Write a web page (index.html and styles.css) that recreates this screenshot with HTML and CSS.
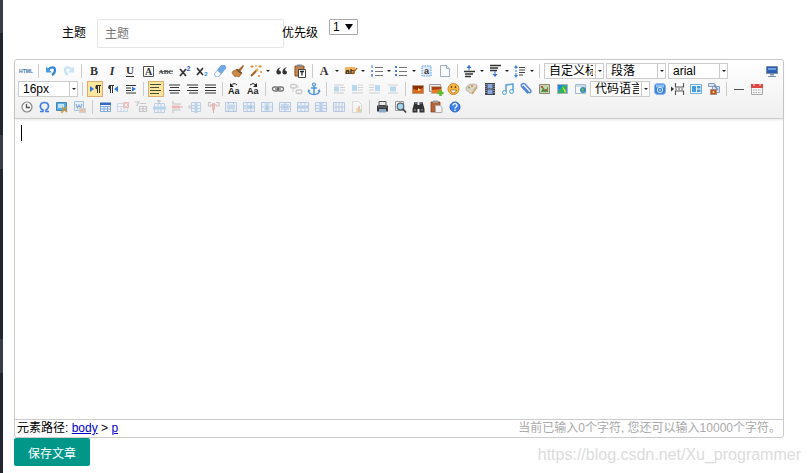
FILE: index.html
```html
<!DOCTYPE html>
<html lang="zh-CN">

<head>
    <meta charset="UTF-8">
    <meta name="viewport" content="width=device-width, initial-scale=1.0">
    <title>写文章</title>
    <link rel="stylesheet" href="styles.css">
</head>

<body>
    <div class="side"></div>
    <form class="main">
        <div class="form-row">
            <label class="label-title" for="title">主题</label>
            <input class="title-input" type="text" id="title" placeholder="主题">
            <label class="label-level" for="level">优先级</label>
            <div class="level">
                <select id="level">
                    <option>1</option>
                    <option>2</option>
                    <option>3</option>
                </select>
                <svg viewBox="0 0 8 8"><path d="M0 1h8L4 7z" /></svg>
            </div>
        </div>

        <div class="editor">
            <div class="toolbar">
                <!-- 第一行 -->
                <div class="tool-row">
                    <button type="button" class="btn" title="源代码"><svg viewBox="0 0 16 16"><text x="8" y="10" font-size="5" font-weight="bold" text-anchor="middle" fill="#3d73a8">HTML</text></svg></button>
                    <i class="sep"></i>
                    <button type="button" class="btn" title="撤销"><svg viewBox="0 0 16 16"><path d="M5 7c3-4 7-3 7 0 0 2-1 4-3 5" fill="none" stroke="#3388d5" stroke-width="2.2" /><path d="M3 3.500v6h6z" fill="#4a9be2" /></svg></button>
                    <button type="button" class="btn off" title="重做"><svg viewBox="0 0 16 16"><path d="M11 7C8 3 4 4 4 7c0 2 1 4 3 5" fill="none" stroke="#6bb2e8" stroke-width="2.200" /><path d="M13 3.500v6H7z" fill="#6bb2e8" /></svg></button>
                    <i class="sep"></i>
                    <button type="button" class="btn" title="加粗"><svg viewBox="0 0 16 16"><text class="serif" x="8" y="12" font-size="12" font-weight="bold">B</text></svg></button>
                    <button type="button" class="btn" title="斜体"><svg viewBox="0 0 16 16"><text class="serif" x="8" y="12" font-size="12" font-weight="bold" font-style="italic">I</text></svg></button>
                    <button type="button" class="btn" title="下划线"><svg viewBox="0 0 16 16"><text class="serif" x="8" y="11" font-size="11" font-weight="bold">U</text><path d="M4 13.500h8" stroke="#333" /></svg></button>
                    <button type="button" class="btn" title="字符边框"><svg viewBox="0 0 16 16"><path d="M3.500 3.500h10v10h-10z" fill="#fff" stroke="#555" /><text class="serif" x="8.500" y="12" font-size="10" font-weight="bold">A</text></svg></button>
                    <button type="button" class="btn" title="删除线"><svg viewBox="0 0 16 16"><text class="serif" x="8" y="11" font-size="7" font-weight="bold">ABC</text><path d="M1 8.500h14" stroke="#444" stroke-width=".7" /></svg></button>
                    <button type="button" class="btn" title="上标"><svg viewBox="0 0 16 16"><path d="M4 6l6 7M10 6l-6 7" stroke="#333" stroke-width="1.700" /><text x="12.500" y="7.500" font-size="7" font-weight="bold" text-anchor="middle" fill="#2b63c8">2</text></svg></button>
                    <button type="button" class="btn" title="下标"><svg viewBox="0 0 16 16"><path d="M3 5l6 7M9 5l-6 7" stroke="#333" stroke-width="1.700" /><text x="12" y="13" font-size="6" font-weight="bold" text-anchor="middle" fill="#2b8be0">2</text></svg></button>
                    <button type="button" class="btn" title="清除格式"><svg viewBox="0 0 16 16"><path d="M9 2.500h4l1 2.500-7 8.500H3.500L2.500 11z" fill="#6fa8e8" stroke="#5f8cc8" stroke-width=".6" /><path d="M5 7.500l4 3-2.500 3h-3l-1-2.500z" fill="#fff" stroke="#9ab4d0" stroke-width=".6" /></svg></button>
                    <button type="button" class="btn" title="格式刷"><svg viewBox="0 0 16 16"><path d="M8 7l5-5 1 1-4 6z" fill="#a8672a" /><path d="M3 8l5-2 4 4-3 4-3-1-1 1-3-4z" fill="#c98b45" stroke="#8e5722" stroke-width=".6" /><path d="M6.500 6.500l5 4" stroke="#6c4b34" stroke-width="1.500" /></svg></button>
                    <div class="split">
                        <button type="button" class="btn" title="自动排版"><svg viewBox="0 0 16 16"><path d="M3 13l6-6" stroke="#a6602a" stroke-width="2" /><path d="M8 8l2-2" stroke="#e8b040" stroke-width="2" /><path d="M4 2v3M2.500 3.500h3M8 2v2M12 2v3M10.500 3.500h3M13 8v2M12 9h2M11 12v2M10 13h2" stroke="#f08428" /></svg></button>
                        <i class="arrow"></i>
                    </div>
                    <button type="button" class="btn" title="引用"><svg viewBox="0 0 16 16"><path d="M7 4C4 5 2 7 2.500 10c.4 2 4.500 2 4.500-.5C7 8 6 7.500 4.800 7.500 5 6 6 5 7 4zM13 4c-3 1-5 3-4.500 6 .4 2 4.500 2 4.500-.5 0-1.500-1-2-2.200-2 .2-1.500 1.200-2.500 2.200-3.500z" fill="#333" /></svg></button>
                    <button type="button" class="btn" title="纯文本粘贴"><svg viewBox="0 0 16 16"><path d="M3 3h9v10H3z" fill="#c9824a" stroke="#8a5026" /><path d="M5 1.500h5V4H5z" fill="#888" /><path d="M6.500 6.500h7v8h-7z" fill="#fff" stroke="#444" /><path d="M8 8.500h4M10 8.500v4" stroke="#222" stroke-width="1.300" /></svg></button>
                    <i class="sep"></i>
                    <div class="split">
                        <button type="button" class="btn" title="字体颜色"><svg viewBox="0 0 16 16"><text class="serif" x="7" y="12" font-size="12" font-weight="bold">A</text></svg></button>
                        <i class="arrow"></i>
                    </div>
                    <div class="split">
                        <button type="button" class="btn" title="背景色"><svg viewBox="0 0 16 16"><path d="M2 4h10v7H2z" fill="#f5b35c" /><text x="7" y="10.500" font-size="8" font-weight="bold" text-anchor="middle" fill="#222">ab</text><path d="M9 11l5-6" stroke="#b56a2c" stroke-width="1.500" /></svg></button>
                        <i class="arrow"></i>
                    </div>
                    <div class="split menu">
                        <button type="button" class="btn" title="有序列表"><svg viewBox="0 0 16 16"><path d="M3 2v3M2 8h2M2 12h2M3 7v2M3 11v3" stroke="#3f6fd0" /><path d="M6 4.500h8M6 8.500h8M6 12.500h8" stroke="#777" /></svg></button>
                        <i class="arrow"></i>
                    </div>
                    <div class="split menu">
                        <button type="button" class="btn" title="无序列表"><svg viewBox="0 0 16 16"><path d="M1 3h2v2H1zM1 7h2v2H1zM1 11h2v2H1z" fill="#4a78e0" /><path d="M5 4.500h8M5 8.500h8M5 12.500h8" stroke="#777" /></svg></button>
                        <i class="arrow"></i>
                    </div>
                    <button type="button" class="btn" title="全选"><svg viewBox="0 0 16 16"><path d="M3 3h9v10H3z" fill="#dceafa" stroke="#5d98df" stroke-dasharray="1.500 1" /><text x="7.500" y="11" font-size="9" font-weight="bold" text-anchor="middle" fill="#333">a</text></svg></button>
                    <button type="button" class="btn" title="清空文档"><svg viewBox="0 0 16 16"><path d="M3.500 2.500h6l3 3v8h-9z" fill="#fafcff" stroke="#9fb0c6" /><path d="M9.500 2.500v3h3" fill="#dfe8f2" stroke="#9fb0c6" /></svg></button>
                    <i class="sep"></i>
                    <div class="split menu">
                        <button type="button" class="btn" title="段前距"><svg viewBox="0 0 16 16"><path d="M2 8.500h11M3 11h8M3 13.500h6" stroke="#333" stroke-width="1.300" /><path d="M7 2.500v5" stroke="#3972c8" /><path d="M7 2l2.500 3h-5z" fill="#3972c8" /></svg></button>
                        <i class="arrow"></i>
                    </div>
                    <div class="split menu">
                        <button type="button" class="btn" title="段后距"><svg viewBox="0 0 16 16"><path d="M3 2.500h11M3 5h8M3 7.500h7" stroke="#333" stroke-width="1.300" /><path d="M8 8v5" stroke="#3972c8" /><path d="M8 14l2.500-3h-5z" fill="#3972c8" /></svg></button>
                        <i class="arrow"></i>
                    </div>
                    <div class="split menu">
                        <button type="button" class="btn" title="行间距"><svg viewBox="0 0 16 16"><path d="M7 4.500h6M7 7h6M7 9.500h6M7 12h4" stroke="#444" /><path d="M4 4v9" stroke="#3972c8" stroke-dasharray="2 1" /><path d="M4 2l2 3H2zM4 15l2-3H2z" fill="#3b82dc" /></svg></button>
                        <i class="arrow"></i>
                    </div>
                    <i class="sep"></i>
                    <div class="combo"><select aria-label="自定义标题"><option>自定义标题</option></select><i class="arrow"></i></div>
                    <div class="combo"><select aria-label="段落格式"><option>段落</option></select><i class="arrow"></i></div>
                    <div class="combo"><select aria-label="字体"><option>arial</option></select><i class="arrow"></i></div>
                    <button type="button" class="btn full" title="全屏"><svg viewBox="0 0 16 16"><path d="M2.500 3.500h11v7h-11z" fill="#2b5fb4" stroke="#7b8da8" /><path d="M4 5h8v2H4z" fill="#6f9fe0" /><path d="M6 11h4v1.500H6zM4 13h8v1H4z" fill="#8091a8" /></svg></button>
                </div>

                <!-- 第二行 -->
                <div class="tool-row">
                    <div class="combo"><select aria-label="字号"><option>16px</option></select><i class="arrow"></i></div>
                    <i class="sep"></i>
                    <button type="button" class="btn on" title="从左向右输入"><svg viewBox="0 0 14 14"><path d="M2 4l4 3-4 3z" fill="#2f79dc" /><path d="M9.500 3v8M11.500 3v8M8 3.500h5" stroke="#333" /><path d="M9.500 3a2 2 0 0 0 0 4.500z" fill="#333" /></svg></button>
                    <button type="button" class="btn" title="从右向左输入"><svg viewBox="0 0 16 16"><path d="M13 5L9 8l4 3z" fill="#2f79dc" /><path d="M5.500 4v8M7.500 4v8M4 4.500h5" stroke="#333" /><path d="M5.500 4a2 2 0 0 0 0 4.500z" fill="#333" /></svg></button>
                    <button type="button" class="btn" title="首行缩进"><svg viewBox="0 0 16 16"><path d="M3 4.500h10M3 7h5M3 9.500h5M3 12h10" stroke="#333" stroke-width="1.200" /><path d="M9 5.500v5L13 8z" fill="#2f79dc" /></svg></button>
                    <i class="sep"></i>
                    <button type="button" class="btn on" title="居左对齐"><svg viewBox="0 0 14 14"><path d="M1 2.500h11M1 5.500h9M1 8.500h11M1 11.500h9" stroke="#4b4b3c" /></svg></button>
                    <button type="button" class="btn" title="居中对齐"><svg viewBox="0 0 16 16"><path d="M3 4h11M4 6.500h9M3 9.500h11M4 12h9" stroke="#333" stroke-width="1.200" /></svg></button>
                    <button type="button" class="btn" title="居右对齐"><svg viewBox="0 0 16 16"><path d="M3 4h11M5 6.500h9M3 9.500h11M5 12h9" stroke="#333" stroke-width="1.200" /></svg></button>
                    <button type="button" class="btn" title="两端对齐"><svg viewBox="0 0 16 16"><path d="M3 4h11M3 6.500h11M3 9.500h11M3 12h11" stroke="#333" stroke-width="1.200" /></svg></button>
                    <i class="sep"></i>
                    <button type="button" class="btn" title="字母大写"><svg viewBox="0 0 16 16"><text x="1" y="13" font-size="9" font-weight="bold" fill="#222">Aa</text><path d="M4 4.500Q7 1 10 4" fill="none" stroke="#222" /><path d="M3 2v4h4z" fill="#222" /></svg></button>
                    <button type="button" class="btn" title="字母小写"><svg viewBox="0 0 16 16"><text x="2" y="13" font-size="9" font-weight="bold" fill="#222">Aa</text><path d="M5 4Q8 1 11 4" fill="none" stroke="#222" /><path d="M12 2v4H8z" fill="#222" /></svg></button>
                    <i class="sep"></i>
                    <button type="button" class="btn" title="超链接"><svg viewBox="0 0 16 16"><rect x="2.500" y="6" width="6" height="4" rx="2" fill="none" stroke="#777" stroke-width="1.300" /><rect x="7.500" y="6" width="6" height="4" rx="2" fill="none" stroke="#777" stroke-width="1.300" /><path d="M5 8h6" stroke="#555" /></svg></button>
                    <button type="button" class="btn off" title="取消链接"><svg viewBox="0 0 16 16"><rect x="2.500" y="3.500" width="6" height="3.500" rx="1.700" fill="none" stroke="#777" stroke-width="1.300" /><rect x="8" y="9" width="6" height="3.500" rx="1.700" fill="none" stroke="#777" stroke-width="1.300" /><path d="M10 4v3M5 8v3" stroke="#888" /></svg></button>
                    <button type="button" class="btn" title="锚点"><svg viewBox="0 0 16 16"><circle cx="8" cy="3.500" r="1.500" fill="none" stroke="#4f95d8" stroke-width="1.200" /><path d="M8 5v8M5 7h6M2.500 9.500c.5 3 3 4 5.500 4s5-1 5.500-4" fill="none" stroke="#4f95d8" stroke-width="1.500" /><path d="M1.500 11l1-3 2 2zM14.500 11l-1-3-2 2z" fill="#4f95d8" /></svg></button>
                    <i class="sep"></i>
                    <button type="button" class="btn off" title="默认浮动"><svg viewBox="0 0 16 16"><path d="M3 4h10M9 6.500h5M9 9h5M3 12h10" stroke="#888" /><path d="M3 5.500h5v5H3z" fill="#45a3dd" /></svg></button>
                    <button type="button" class="btn off" title="左浮动"><svg viewBox="0 0 16 16"><path d="M9 4h5M9 6.500h5M9 9h5M3 12h11" stroke="#888" /><path d="M3 4h5v6H3z" fill="#45a3dd" /></svg></button>
                    <button type="button" class="btn off" title="右浮动"><svg viewBox="0 0 16 16"><path d="M2 4h5M2 6.500h5M2 9h5M2 12h11" stroke="#888" /><path d="M8 4h5v6H8z" fill="#45a3dd" /></svg></button>
                    <button type="button" class="btn off" title="居中"><svg viewBox="0 0 16 16"><path d="M3 4h10M3 12h10" stroke="#888" /><path d="M5 5.500h6v5H5z" fill="#45a3dd" /></svg></button>
                    <i class="sep"></i>
                    <button type="button" class="btn" title="单图上传"><svg viewBox="0 0 16 16"><path d="M2.500 4.500h11v8h-11z" fill="#8a2e08" stroke="#b89a80" /><path d="M3 8l5 1 5-2v5H3z" fill="#dc681c" /><path d="M8 7l3 2-3 1z" fill="#ffe27a" /></svg></button>
                    <button type="button" class="btn" title="多图上传"><svg viewBox="0 0 16 16"><path d="M1.500 3.500h11v7h-11z" fill="#eee" stroke="#999" /><path d="M3.500 5.500h10v7h-10z" fill="#a83e12" stroke="#c8b09c" /><path d="M4 9l9-1v4H4z" fill="#e67a28" /><path d="M12.500 9v6M9.500 12h6" stroke="#5fbe30" stroke-width="2.500" /></svg></button>
                    <button type="button" class="btn" title="表情"><svg viewBox="0 0 16 16"><circle cx="7.500" cy="8" r="5.500" fill="#f7b93e" stroke="#d28a2a" /><path d="M4.500 9h6q-.5 3-3 3t-3-3z" fill="#fff" stroke="#a0601a" stroke-width=".7" /><path d="M5.500 5v2M9.500 5v2" stroke="#704010" stroke-width="1.300" /></svg></button>
                    <button type="button" class="btn" title="涂鸦"><svg viewBox="0 0 16 16"><path d="M2 8c0-5 7-6 11-4 1 2-3 3-3 5s-2 4-4 3-1-2-2-2-2 0-2-2z" fill="#ddd5c8" stroke="#b5aa9b" stroke-width=".8" /><circle cx="5" cy="6.500" r="1" fill="#76b04a" /><circle cx="8" cy="5" r="1" fill="#de7f3d" /><path d="M8 13l5-7" stroke="#c7a36d" stroke-width="1.500" /></svg></button>
                    <button type="button" class="btn" title="视频"><svg viewBox="0 0 16 16"><path d="M3 2h10v12H3z" fill="#43444c" /><path d="M5.500 3h5v4.500h-5zM5.500 8.500h5V13h-5z" fill="#89a9e4" /><path d="M4 3v10M12 3v10" stroke="#c0c0c0" stroke-dasharray="1 1" /></svg></button>
                    <button type="button" class="btn" title="音乐"><svg viewBox="0 0 16 16"><path d="M6 11V4l7-1v7" fill="none" stroke="#60a7dc" stroke-width="1.600" /><circle cx="4.500" cy="11.500" r="2" fill="#d7edfa" stroke="#60a7dc" /><circle cx="11.500" cy="10.500" r="2" fill="#d7edfa" stroke="#60a7dc" /></svg></button>
                    <button type="button" class="btn" title="附件"><svg viewBox="0 0 16 16"><path d="M5 5l5.500 6c1.500 1.500 3.500 0 2-2L7 3C5 1.500 2 3.500 4 6l6 6.500" fill="none" stroke="#5485d8" stroke-width="1.400" /></svg></button>
                    <button type="button" class="btn" title="百度地图"><svg viewBox="0 0 16 16"><path d="M3.500 3.500h10v9h-10z" fill="#c9d7b0" stroke="#887" /><path d="M5 11l2-5 3 4 2-5v6z" fill="#52924a" /><path d="M5 5h2v2H5zM9 8h2v2H9z" fill="#b75444" /></svg></button>
                    <button type="button" class="btn" title="谷歌地图"><svg viewBox="0 0 16 16"><path d="M3.500 3.500h10v9h-10z" fill="#29a5e4" stroke="#b0b0b0" /><path d="M4 12l4-8 5 1-2 7z" fill="#2fb45a" /><path d="M4 4h5L5 9z" fill="#1485e0" /><path d="M8 5l4 5-1 2z" fill="#f2df3e" /></svg></button>
                    <button type="button" class="btn" title="插入框架"><svg viewBox="0 0 16 16"><path d="M3.500 3.500h10v9h-10z" fill="#f8fbff" stroke="#a4bad0" /><path d="M4 4h9v2H4z" fill="#c9dcee" /><circle cx="11" cy="9" r="3" fill="#3a87bd" /><path d="M9 8l2-1 1 2-1 2z" fill="#6cbd5d" /></svg></button>
                    <div class="combo"><select aria-label="代码语言"><option>代码语言</option></select><i class="arrow"></i></div>
                    <button type="button" class="btn" title="百度应用"><svg viewBox="0 0 16 16"><rect x="2.500" y="2.500" width="11" height="11" rx="3" fill="#3d83dc" stroke="#8ab8ec" /><path d="M4 3.500h8v3H4z" fill="#8dc0f2" /><circle cx="8" cy="9" r="2.700" fill="none" stroke="#d5eaff" /><path d="M7 9h2" stroke="#fff" /></svg></button>
                    <button type="button" class="btn" title="分页"><svg viewBox="0 0 16 16"><path d="M5.500 2v4h8V2M5.500 14v-4h8v4" fill="#fff" stroke="#555" stroke-width="1.200" /><path d="M5 8h9" stroke="#666" stroke-dasharray="2 1" /><path d="M1 5.500v5L4 8z" fill="#333" /></svg></button>
                    <button type="button" class="btn" title="模板"><svg viewBox="0 0 16 16"><path d="M2.500 3.500h11v9h-11z" fill="#eaf5ff" stroke="#73aee0" /><path d="M4 5h4v6H4zM9 5h3.500v2.500H9zM9 8.500h3.500V11H9z" fill="#4a9bdc" /></svg></button>
                    <button type="button" class="btn" title="背景"><svg viewBox="0 0 16 16"><path d="M2.500 2.500h6l2 3h-8zM6.500 5.500h7v6h-7z" fill="#dbe6f4" stroke="#879cba" /><path d="M4.500 8.500h6v5h-6z" fill="#c84c17" stroke="#a08e80" /><path d="M8 4l4 5" stroke="#6c93cc" stroke-width="1.500" /><circle cx="7.500" cy="11" r="1" fill="#ffe18a" /></svg></button>
                    <i class="sep"></i>
                    <button type="button" class="btn" title="分隔线"><svg viewBox="0 0 16 16"><path d="M3 8.500h10" stroke="#555" /></svg></button>
                    <button type="button" class="btn" title="日期"><svg viewBox="0 0 16 16"><path d="M2.500 4.500h11v9h-11z" fill="#f5f5f5" stroke="#aaa" /><path d="M2 3h12v4H2z" fill="#df4543" /><path d="M5 2v3M11 2v3" stroke="#eee" /><path d="M4 9h8M4 11.500h8" stroke="#aaa" stroke-dasharray="1.500 1" /></svg></button>
                </div>

                <!-- 第三行 -->
                <div class="tool-row">
                    <button type="button" class="btn" title="时间"><svg viewBox="0 0 16 16"><circle cx="9" cy="8" r="5" fill="#f5f5f5" stroke="#888" stroke-width="1.200" /><path d="M8.500 5v3.500H12" fill="none" stroke="#555" stroke-width="1.300" /></svg></button>
                    <button type="button" class="btn" title="特殊字符"><svg viewBox="0 0 16 16"><path d="M4 12.500h3v-1.500C2.500 8.500 4 3.500 8.500 3.500S14 8.500 10 11v1.500h3" fill="none" stroke="#3f7ee8" stroke-width="1.600" /></svg></button>
                    <button type="button" class="btn" title="截图"><svg viewBox="0 0 16 16"><path d="M2.500 3.500h10v8h-10z" fill="#56aee0" stroke="#4b82ae" /><path d="M4 5h6v4H4z" fill="#c1e6f6" /><path d="M8 8l5 5M13 8l-5 5" stroke="#c8953c" stroke-width="1.500" /><circle cx="8" cy="13" r="1.300" fill="#d7b36a" /></svg></button>
                    <button type="button" class="btn half" title="图片转存"><svg viewBox="0 0 16 16"><path d="M2.500 2.500h9v9h-9z" fill="#e5f0fb" stroke="#75a4d8" /><path d="M4 5l1.500 4L7 6l1.500 3L10 5" fill="none" stroke="#4d82c4" stroke-width="1.200" /><path d="M7.500 9.500h6v4h-6z" fill="#e0a383" stroke="#bbb" /></svg></button>
                    <i class="sep"></i>
                    <button type="button" class="btn" title="插入表格"><svg viewBox="0 0 16 16"><path d="M3.500 4.500h10v8h-10zM3.500 7.500h10M3.500 10h10M7 7v5.500M10.500 7v5.500" fill="#f2f7ff" stroke="#82a8dc" /><path d="M3 3.500h11v2.500H3z" fill="#346bc2" /></svg></button>
                    <button type="button" class="btn off" title="删除表格"><svg viewBox="0 0 16 16"><path d="M2.500 4.500h10v8h-10zM2.500 7.500h10M6 7v5M9 7v5" fill="#f2f7ff" stroke="#82a8dc" /><path d="M8 3h6v6H8z" fill="#e35d52" /><path d="M9.500 4.500l3 3M12.500 4.500l-3 3" stroke="#fff" /></svg></button>
                    <button type="button" class="btn off" title="表格前插入行"><svg viewBox="0 0 16 16"><path d="M2 3h4L3.500 7M7 4.500h6M6.500 7.500h7v5h-7zM10 7.500v5M6.500 10h7" fill="none" stroke="#777" stroke-width="1.200" /></svg></button>
                    <button type="button" class="btn off" title="前插入行"><svg viewBox="0 0 16 16"><path d="M3.500 4.500h10v9h-10zM7 4.500v9M10 4.500v9" fill="#eaf3ff" stroke="#5d91d2" /><path d="M2 7.500h13v3H2z" fill="#4f9ddd" /><path d="M8 1v4M6 2h4" stroke="#555" /></svg></button>
                    <button type="button" class="btn off" title="删除行"><svg viewBox="0 0 16 16"><path d="M4 2v3h8M4 14v-3h8" fill="none" stroke="#777" stroke-width="1.200" /><path d="M3 6.500h8v3H3z" fill="#e0524a" /><path d="M11 8h3" stroke="#b33" /></svg></button>
                    <button type="button" class="btn off" title="前插入列"><svg viewBox="0 0 16 16"><path d="M4.500 3.500h9v9h-9zM4.500 6.500h9M4.500 9.500h9" fill="#eaf3ff" stroke="#5d91d2" /><path d="M7.500 3h3v11h-3z" fill="#4f9ddd" /><path d="M1.500 8h4M3.500 6l-2 2 2 2" fill="none" stroke="#777" /></svg></button>
                    <button type="button" class="btn off" title="删除列"><svg viewBox="0 0 16 16"><path d="M3.500 3v4h3M14 3v4h-3M3 3.500h3M11 3.500h3" fill="none" stroke="#777" stroke-width="1.200" /><path d="M7 4h3v7H7z" fill="#e0524a" /><path d="M8.500 10v4M5 6h7" stroke="#b33" /></svg></button>
                    <button type="button" class="btn off" title="合并多个单元格"><svg viewBox="0 0 16 16"><path class="grid" d="M2.500 3.500h11v9h-11z" /><path d="M4 5.500h8v5H4z" fill="#7caae2" /><path d="M5.500 3v2M10.500 3v2M5.500 11v2M10.500 11v2" stroke="#3565b4" /></svg></button>
                    <button type="button" class="btn off" title="右合并单元格"><svg viewBox="0 0 16 16"><path class="grid" d="M2.500 3.500h11v9h-11zM6 3.500v3M10 3.500v3M6 10v3M10 10v3" /><path d="M3 6h10v4H3z" fill="#7ab7e8" /><path d="M6 8h5M9 6.500l2 1.500-2 1.500" fill="none" stroke="#2c5aa4" /></svg></button>
                    <button type="button" class="btn off" title="下合并单元格"><svg viewBox="0 0 16 16"><path class="grid" d="M2.500 3.500h11v9h-11zM2.500 8h3M10.500 8h3" /><path d="M5.500 4h5v8h-5z" fill="#7ab7e8" /><path d="M8 6v4M6.500 8.500L8 10.500l1.500-2" fill="none" stroke="#2c5aa4" /></svg></button>
                    <button type="button" class="btn off" title="完全拆分单元格"><svg viewBox="0 0 16 16"><path class="grid" d="M2.500 3.500h11v9h-11z" /><path d="M4 5h8v6H4z" fill="#7caae2" /><path d="M8 4v8M3 8h10" stroke="#3565b4" stroke-dasharray="2 1" /></svg></button>
                    <button type="button" class="btn off" title="拆分成行"><svg viewBox="0 0 16 16"><path class="grid" d="M2.500 3.500h11v9h-11zM6 3.500v9M10 3.500v9" /><path d="M3 6h10v4H3z" fill="#7ab7e8" /><path d="M3 8h10" stroke="#3565b4" /></svg></button>
                    <button type="button" class="btn off" title="拆分成列"><svg viewBox="0 0 16 16"><path class="grid" d="M2.500 3.500h11v9h-11zM2.500 6.500h11M2.500 9.500h11" /><path d="M5.500 4h5v8h-5z" fill="#7ab7e8" /><path d="M8 4v8" stroke="#3565b4" /></svg></button>
                    <button type="button" class="btn off" title="平均分布各列"><svg viewBox="0 0 16 16"><path class="grid" d="M2.500 3.500h11v9h-11zM5 3.500v9M8 3.500v9M11 3.500v9M2.500 8h11" /></svg></button>
                    <button type="button" class="btn off" title="图表"><svg viewBox="0 0 16 16"><path d="M3.500 2.500h6l3 3v8h-9z" fill="#fff" stroke="#b0b0a0" /><path d="M7 13V9h2v4z" fill="#e4c03c" /><path d="M9 13V7h2v6z" fill="#de7046" /><path d="M11 13v-3h2v3z" fill="#8ab84e" /></svg></button>
                    <i class="sep"></i>
                    <button type="button" class="btn" title="打印"><svg viewBox="0 0 16 16"><path d="M5 2.500h7v4H5z" fill="#e8e8e8" stroke="#555" /><path d="M3 6.500h11v6H3z" fill="#35373b" /><path d="M5 10h7v3.500H5z" fill="#8ba9c7" /><path d="M4 8h9" stroke="#777" /></svg></button>
                    <button type="button" class="btn" title="预览"><svg viewBox="0 0 16 16"><path d="M3.500 2.500h8v9h-8z" fill="#f5f5f5" stroke="#999" /><circle cx="8.500" cy="7.500" r="3.300" fill="#a5d4ee" stroke="#55636f" stroke-width="1.200" /><path d="M11 10l3 3.500" stroke="#444" stroke-width="1.800" /></svg></button>
                    <button type="button" class="btn" title="查询替换"><svg viewBox="0 0 16 16"><path d="M4.500 3h3v3h2V3h3l2 7v3.500h-5V10h-2v3.500h-5V10z" fill="#303236" /><path d="M4 11h2M11 11h2M5 4h2M10 4h2" stroke="#a8a8a8" /></svg></button>
                    <button type="button" class="btn" title="从草稿箱加载"><svg viewBox="0 0 16 16"><path d="M3 3h9v10H3z" fill="#b86335" stroke="#884420" stroke-width=".8" /><path d="M5 1.500h5V4H5z" fill="#999" /><path d="M7.500 6.500h5l1.500 2v5H7.500z" fill="#f3f3f3" stroke="#aaa" /></svg></button>
                    <button type="button" class="btn" title="帮助"><svg viewBox="0 0 16 16"><circle cx="9" cy="8" r="5" fill="#3f82ea" stroke="#2b62c5" /><path d="M7 6.500c0-2.500 4-2.500 4 0C11 8 9 8 9 9.500M9 10.500V12" fill="none" stroke="#fff" stroke-width="1.300" /></svg></button>
                </div>
            </div>

            <div class="edit-area">
                <textarea aria-label="正文"></textarea>
                <span class="caret"></span>
            </div>

            <div class="status">
                <div>元素路径: <a href="#">body</a> &gt; <a href="#">p</a></div>
                <div class="count">当前已输入0个字符, 您还可以输入10000个字符。</div>
            </div>
        </div>

        <button type="button" class="save">保存文章</button>
    </form>
    <div class="watermark">https://blog.csdn.net/Xu_programmer</div>
</body>

</html>
```
FILE: styles.css
```css
* {
    box-sizing: border-box;
}

body {
    margin: 0;
    min-height: 100vh;
    display: flex;
    position: relative;
    background-color: #fff;
    color: #000;
    font-family: "Liberation Sans", Arial, "Noto Sans CJK SC", sans-serif;
    font-size: 12px;
    line-height: 16px;
}

button,
input,
select,
textarea {
    margin: 0;
    font-family: inherit;
    font-size: 12px;
}

/* 左侧菜单边缘 */
.side {
    width: 3px;
    background: linear-gradient(#393d49 33px, #23262e 33px, #23262e 135px, #393d49 135px, #393d49 169px, #23262e 169px, #23262e 339px, #393d49 339px, #393d49 373px, #23262e 373px);
}

.main {
    flex: 1;
    padding: 19px 27px 0 11px;
}

.form-row {
    display: flex;
    align-items: flex-start;
    margin-bottom: 11px;
}

.form-row label {
    line-height: 28px;
}

.label-title {
    width: 83px;
    padding-right: 11px;
    text-align: right;
}

.title-input {
    width: 187px;
    height: 29px;
    padding: 0 7px;
    border: 1px solid #e6e6e6;
    border-radius: 2px;
    background-color: #fff;
}

.title-input::placeholder {
    color: #757575;
}

/* 文字压在输入框的边线上 */
.label-level {
    margin-left: -2px;
    margin-right: 11px;
}

.level {
    display: flex;
    align-items: center;
    width: 29px;
    height: 16px;
    border: 1px solid #a9a9a9;
    border-radius: 1px;
}

.level select {
    width: 15px;
    height: 14px;
    padding: 0 0 0 3px;
    border: 0;
    background: none;
    appearance: none;
    line-height: 14px;
}

.level svg {
    width: 8px;
    height: 8px;
}

/* 编辑器 */
.editor {
    border: 1px solid #ccc;
    border-radius: 3px;
}

.toolbar {
    display: flex;
    flex-direction: column;
    gap: 2px;
    padding: 3px;
    border-bottom: 1px solid #ccc;
    border-radius: 3px 3px 0 0;
    background: linear-gradient(#fff, #efefef);
    box-shadow: 0 1px 3px rgba(0, 0, 0, 0.1);
}

.tool-row {
    display: flex;
    gap: 2px;
    height: 16px;
}

.btn {
    flex: none;
    width: 16px;
    height: 16px;
    padding: 0;
    border: 0;
    background: none;
}

.btn svg {
    display: block;
    width: 100%;
    height: 100%;
}

.btn.on {
    border: 1px solid #dcac6c;
    background-color: #ffe69f;
}

.btn.off {
    opacity: 0.35;
}

.btn.half {
    opacity: 0.6;
}

.btn.full {
    margin-left: auto;
}

.serif {
    font-family: "Liberation Serif", serif;
    text-anchor: middle;
    fill: #333;
}

.grid {
    fill: #e4effb;
    stroke: #4b7fca;
}

.sep {
    flex: none;
    width: 5px;
    height: 14px;
    margin: 1px 0;
    background: linear-gradient(#ccc, #ccc) center / 1px 100% no-repeat;
}

.arrow {
    display: flex;
    flex: none;
    align-items: center;
    justify-content: center;
    width: 8px;
}

.arrow::after {
    content: "";
    border: 2px solid transparent;
    border-top-color: #222;
    border-bottom: 0;
}

.split {
    display: flex;
}

.menu .arrow {
    width: 7px;
}

.combo {
    display: flex;
    flex: none;
    width: 60px;
    height: 16px;
    border: 1px solid #ccc;
    background-color: #fff;
}

.combo select {
    flex: 1;
    min-width: 0;
    height: 14px;
    padding: 0 2px 0 4px;
    border: 0;
    background: none;
    color: #000;
    appearance: none;
    line-height: 14px;
}

.combo .arrow {
    border-left: 1px solid #ccc;
}

.edit-area {
    position: relative;
}

.edit-area textarea {
    display: block;
    width: 100%;
    height: 300px;
    padding: 5px 6px;
    border: 0;
    outline: none;
    background: none;
    resize: none;
    font-size: 16px;
}

.caret {
    position: absolute;
    top: 6px;
    left: 6px;
    width: 1px;
    height: 16px;
    background-color: #000;
}

.status {
    display: flex;
    justify-content: space-between;
    height: 18px;
    padding: 0 2px;
    border-top: 1px solid #ccc;
}

.status a {
    color: #00c;
}

.count {
    color: #aaa;
}

.save {
    display: block;
    height: 28px;
    padding: 0 14px;
    border: 0;
    border-radius: 2px;
    background-color: #009688;
    color: #fff;
}

.watermark {
    position: absolute;
    right: 10px;
    bottom: 9px;
    color: #dcdcdc;
    font-size: 16px;
    line-height: 18px;
}
```
